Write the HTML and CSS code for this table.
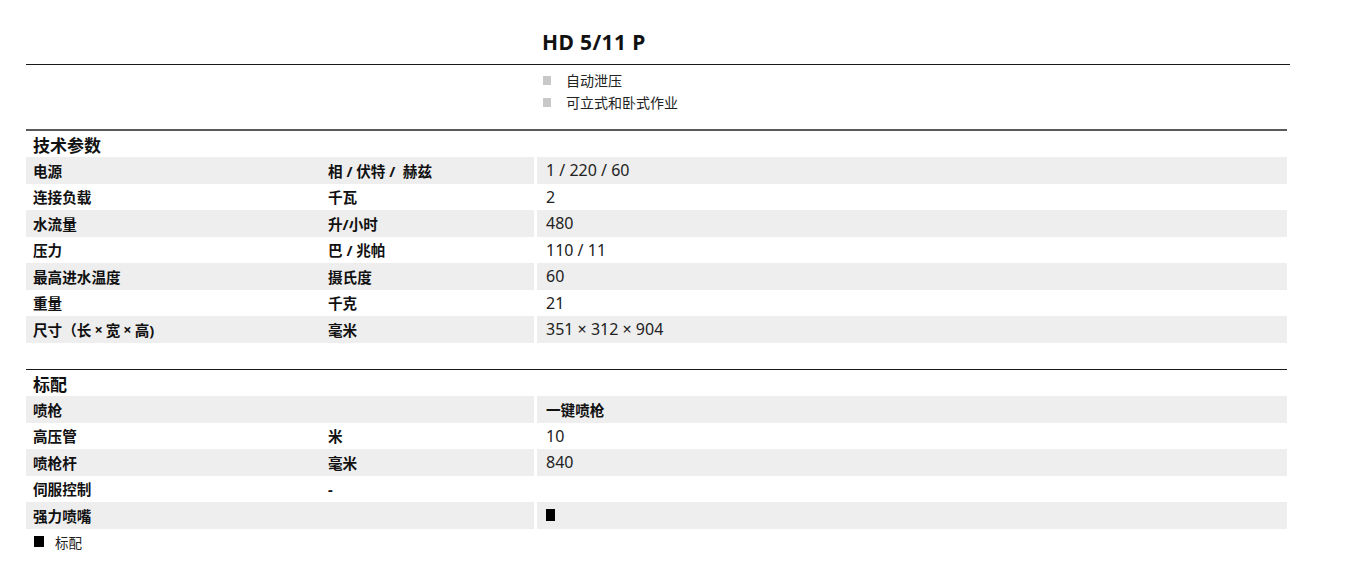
FILE: index.html
```html
<!DOCTYPE html>
<html lang="zh-CN">
<head>
<meta charset="utf-8">
<title>HD 5/11 P</title>
<link rel="stylesheet" href="styles.css">
</head>
<body>
<div class="page">
  <div class="title-row">
    <h1 class="title">HD 5/11 P</h1>
  </div>
  <ul class="features">
    <li class="feature">自动泄压</li>
    <li class="feature">可立式和卧式作业</li>
  </ul>

  <section class="spec spec-first">
    <div class="spec-head">技术参数</div>
    <div class="row alt"><div class="c1">电源</div><div class="c2">相 / 伏特 / &nbsp;赫兹</div><div class="c3">1 / 220 / 60</div></div>
    <div class="row"><div class="c1">连接负载</div><div class="c2">千瓦</div><div class="c3">2</div></div>
    <div class="row alt"><div class="c1">水流量</div><div class="c2">升/小时</div><div class="c3">480</div></div>
    <div class="row"><div class="c1">压力</div><div class="c2">巴 / 兆帕</div><div class="c3">110 / 11</div></div>
    <div class="row alt"><div class="c1">最高进水温度</div><div class="c2">摄氏度</div><div class="c3">60</div></div>
    <div class="row"><div class="c1">重量</div><div class="c2">千克</div><div class="c3">21</div></div>
    <div class="row alt"><div class="c1">尺寸（长<span class="times">×</span>宽<span class="times">×</span>高)</div><div class="c2">毫米</div><div class="c3">351 × 312 × 904</div></div>
  </section>

  <section class="spec spec-second">
    <div class="spec-head">标配</div>
    <div class="row alt"><div class="c1">喷枪</div><div class="c2"></div><div class="c3 bold">一键喷枪</div></div>
    <div class="row"><div class="c1">高压管</div><div class="c2">米</div><div class="c3">10</div></div>
    <div class="row alt"><div class="c1">喷枪杆</div><div class="c2">毫米</div><div class="c3">840</div></div>
    <div class="row"><div class="c1">伺服控制</div><div class="c2">-</div><div class="c3"></div></div>
    <div class="row alt"><div class="c1">强力喷嘴</div><div class="c2"></div><div class="c3"><span class="std-mark"></span></div></div>
    <div class="legend"><span class="legend-mark"></span>标配</div>
  </section>
</div>
</body>
</html>
```

FILE: styles.css
```css
html, body {
  margin: 0;
  padding: 0;
  background: #ffffff;
}

body {
  font-family: "Noto Sans", "Noto Sans CJK SC", sans-serif;
  color: #111111;
}

.page {
  margin-left: 26px;
  width: 1264px;
}

.title-row {
  height: 65px;
  border-bottom: 1px solid #1a1a1a;
  box-sizing: border-box;
  display: flex;
  align-items: flex-end;
}

.title {
  margin: 0 0 9px 516px;
  font-size: 21px;
  font-weight: bold;
  line-height: 26px;
  letter-spacing: 0.4px;
  color: #111111;
}

.features {
  list-style: none;
  margin: 0;
  padding: 4px 0 0 517px;
  height: 60px;
}

.feature {
  display: flex;
  align-items: center;
  height: 22px;
  font-size: 14px;
  color: #222222;
}

.feature::before {
  content: "";
  width: 8px;
  height: 9px;
  background: #c8c8c8;
  margin-right: 15px;
  flex: none;
}

.spec {
  width: 1261px;
}

.spec-first {
  border-top: 2px solid #5a5a5a;
}

.spec-second {
  margin-top: 26.5px;
  border-top: 1px solid #1a1a1a;
}

.spec-head {
  height: 26px;
  display: flex;
  align-items: center;
  padding-left: 7px;
  font-size: 17px;
  font-weight: bold;
  color: #111111;
}

.row {
  display: flex;
  height: 26.5px;
  font-size: 14.6px;
}

.row > div {
  display: flex;
  align-items: center;
  box-sizing: border-box;
}

.c1 {
  width: 295px;
  padding-left: 7px;
  font-weight: bold;
}

.times {
  margin: 0 3px;
}

.c2 {
  width: 213px;
  padding-left: 7px;
  font-weight: bold;
}

.c3 {
  width: 750px;
  margin-left: 3px;
  padding-left: 9px;
  font-size: 16px;
  color: #222222;
}

.c3.bold {
  font-weight: bold;
  font-size: 14.6px;
  color: #111111;
}

.row.alt > div {
  background: #eeeeee;
}

.std-mark {
  display: inline-block;
  width: 9px;
  height: 12px;
  background: #000000;
}

.legend {
  height: 26.5px;
  display: flex;
  align-items: center;
  padding-left: 8px;
  font-size: 13.5px;
  color: #222222;
}

.legend-mark {
  display: inline-block;
  width: 10px;
  height: 11px;
  background: #000000;
  margin-right: 11px;
}
```
